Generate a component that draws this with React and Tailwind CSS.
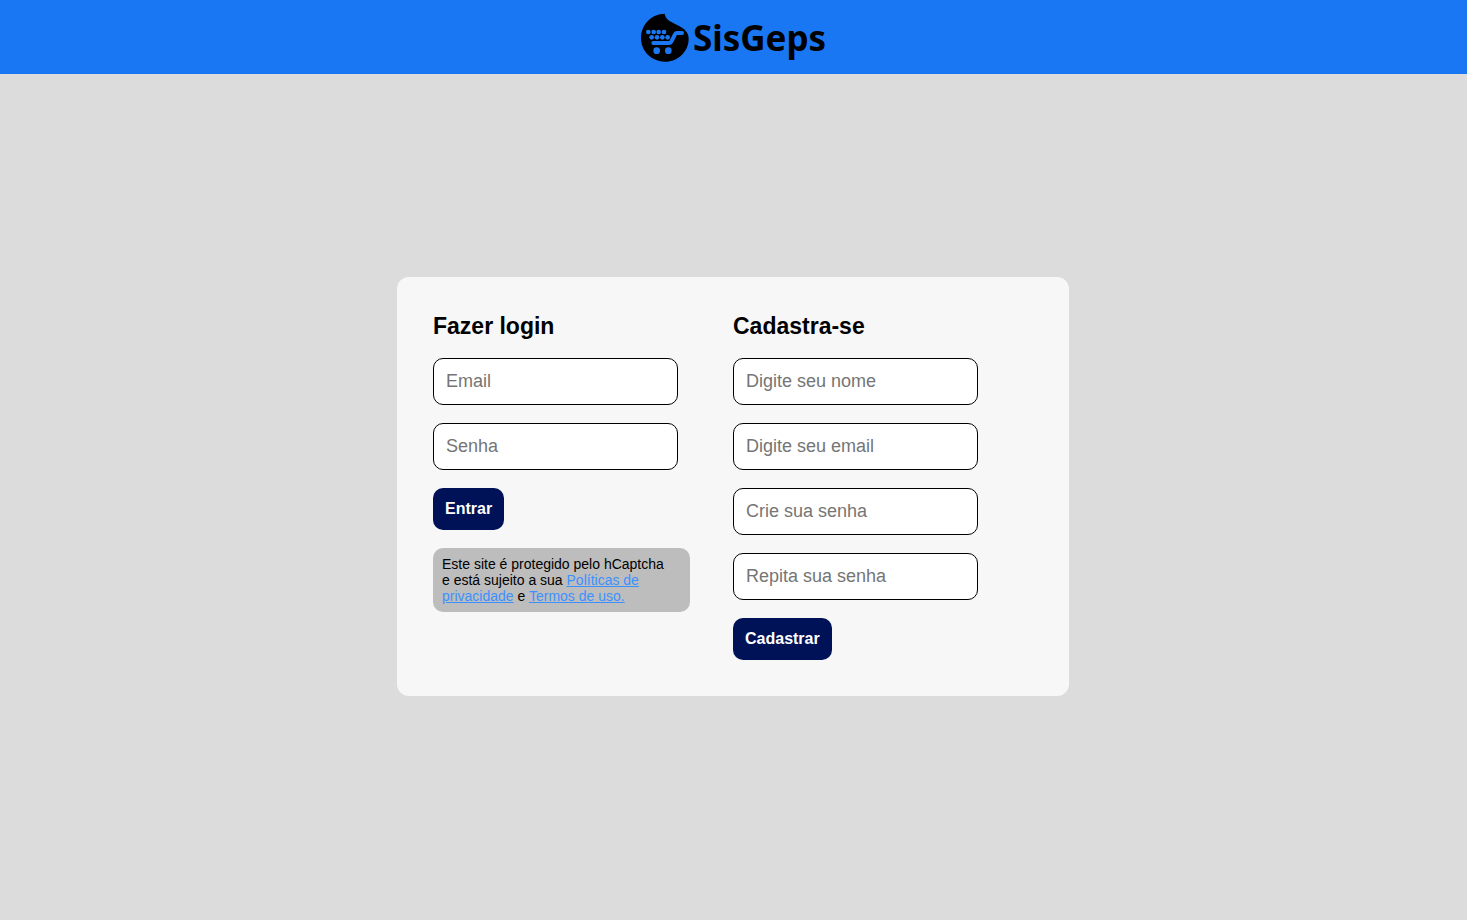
function Logo() {
  return (
    <a href="#" className="flex items-center gap-[3px] text-black">
      <svg viewBox="15 15 147 147" className="size-[49px]" aria-hidden="true">
        <path
          fill="#000"
          d="M86 17C46 18 15 50 15 90C15 130 47 161 87 161C127 161 158 130 158 92C158 74 146 62 128 53C107 42 89 37 86 17Z"
        />
        <g fill="#1977f3">
          <circle cx="37" cy="72" r="7" />
          <circle cx="53" cy="72" r="7" />
          <circle cx="68" cy="72" r="7" />
          <circle cx="84" cy="72" r="7" />
          <circle cx="47" cy="88" r="7" />
          <circle cx="63" cy="88" r="7" />
          <circle cx="79" cy="88" r="7" />
          <circle cx="95" cy="88" r="7" />
          <circle cx="62" cy="128" r="10" />
          <circle cx="97" cy="128" r="10" />
        </g>
        <path
          d="M52 105H100Q104 105 106 101L117 79Q119 75 123 75H138"
          fill="none"
          stroke="#1977f3"
          strokeWidth="12"
          strokeLinecap="round"
          strokeLinejoin="round"
        />
      </svg>
      <span className="font-['Noto_Sans',sans-serif] text-[35px] leading-[49px] font-bold">SisGeps</span>
    </a>
  );
}

function Field({ id, label, type = "text" }) {
  return (
    <input
      id={id}
      type={type}
      aria-label={label}
      placeholder={label}
      className="h-[47px] w-[245px] rounded-[10px] border border-black bg-white px-3 text-lg text-black placeholder:text-[#757575]"
    />
  );
}

function Panel({ title, action, children, footer }) {
  return (
    <form className="flex w-[300px] flex-col items-start gap-[18px]" onSubmit={(e) => e.preventDefault()}>
      <h2 className="text-[23px] leading-[27px] font-bold">{title}</h2>
      {children}
      <button type="submit" className="h-[42px] rounded-[10px] bg-[#001257] px-3 text-base font-bold text-white">
        {action}
      </button>
      {footer}
    </form>
  );
}

export default function App() {
  return (
    <div className="flex min-h-screen flex-col bg-[#dcdcdc] font-['Liberation_Sans',Arial,sans-serif] text-black">
      <header className="flex h-[74px] items-center justify-center bg-[#1977f3]">
        <Logo />
      </header>
      <main className="flex flex-1 items-center justify-center pr-px pb-[21px]">
        <div className="flex flex-wrap rounded-xl bg-[#f7f7f7] p-9">
          <Panel
            title="Fazer login"
            action="Entrar"
            footer={
              <p className="w-[257px] rounded-[10px] bg-[#bdbdbd] py-2 pr-4 pl-[9px] text-sm leading-4">
                Este site é protegido pelo hCaptcha e está sujeito a sua{" "}
                <a href="#privacidade" className="text-[#3c91ff] underline">Políticas de privacidade</a> e{" "}
                <a href="#termos" className="text-[#3c91ff] underline">Termos de uso.</a>
              </p>
            }
          >
            <Field id="login-email" label="Email" type="email" />
            <Field id="login-senha" label="Senha" type="password" />
          </Panel>
          <Panel title="Cadastra-se" action="Cadastrar">
            <Field id="nome" label="Digite seu nome" />
            <Field id="email" label="Digite seu email" type="email" />
            <Field id="senha" label="Crie sua senha" type="password" />
            <Field id="repita" label="Repita sua senha" type="password" />
          </Panel>
        </div>
      </main>
    </div>
  );
}
